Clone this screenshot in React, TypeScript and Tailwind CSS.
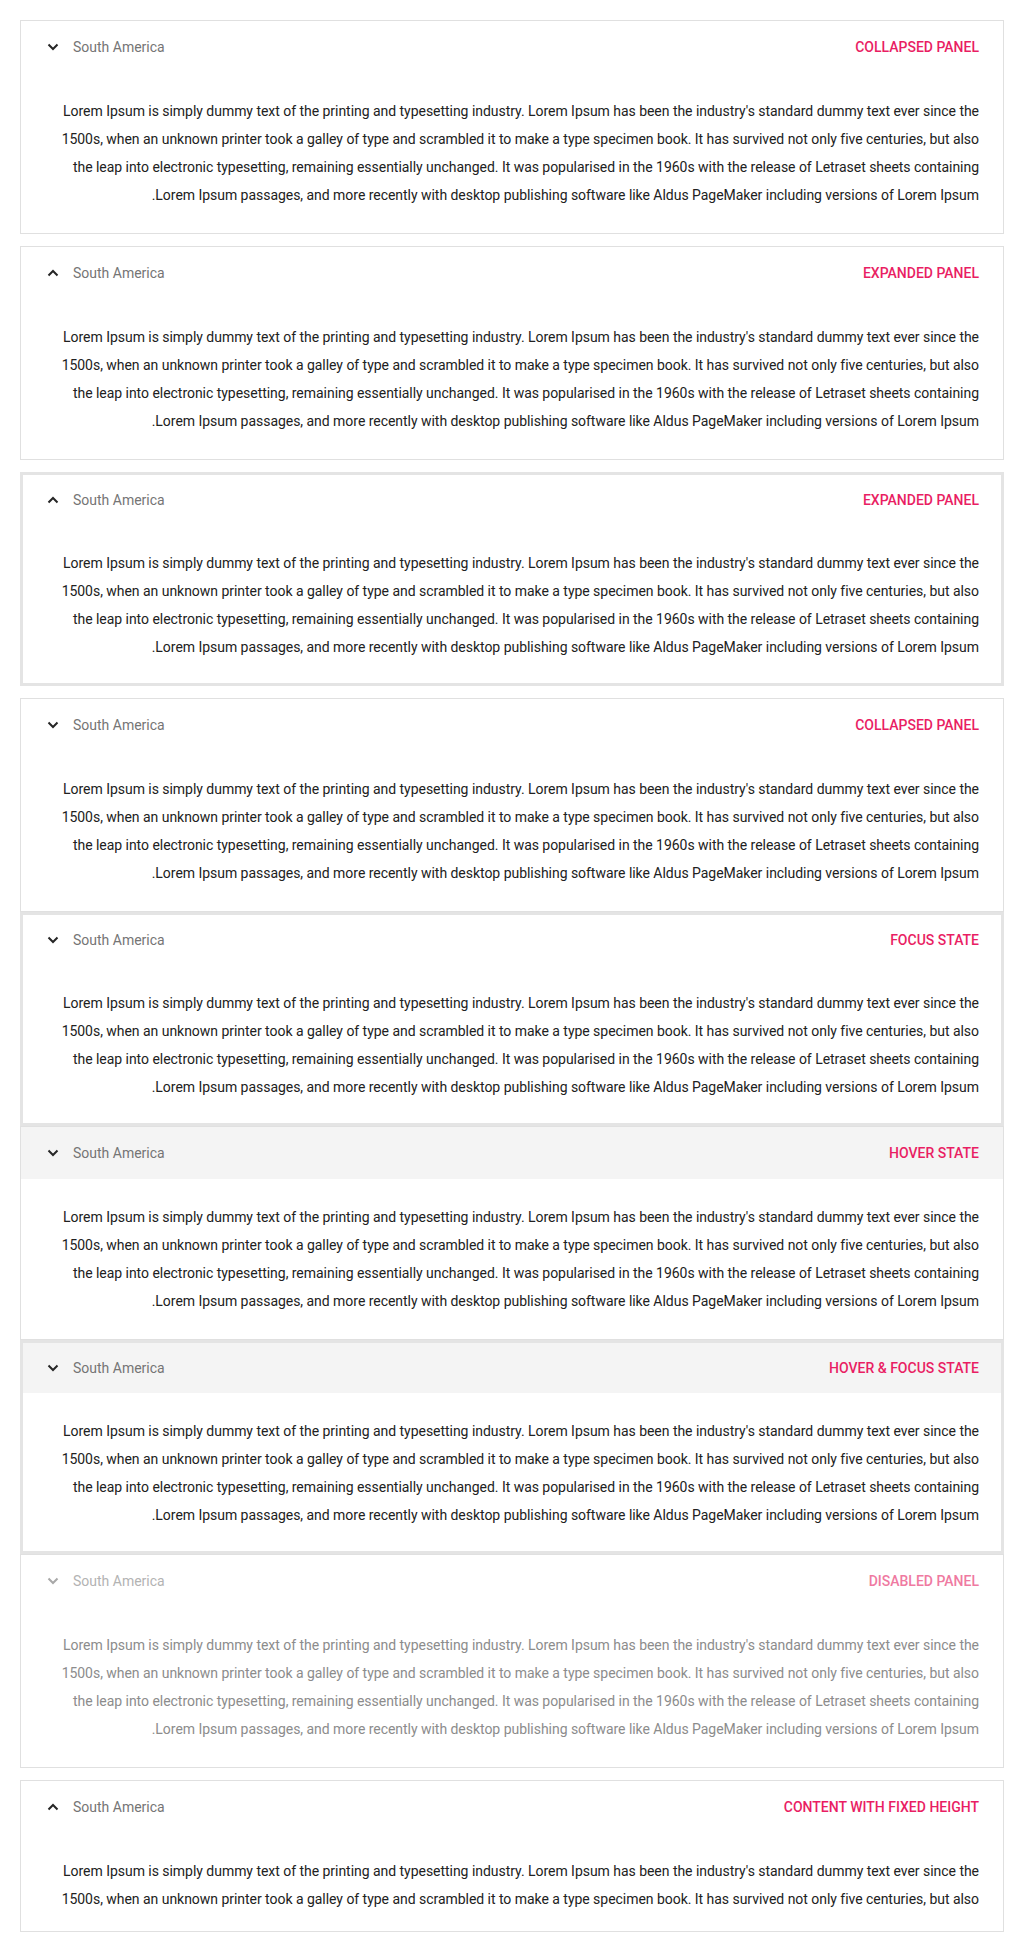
import React from "react";

const LOREM =
  "Lorem Ipsum is simply dummy text of the printing and typesetting industry. Lorem Ipsum has been the industry's standard dummy text ever since the 1500s, when an unknown printer took a galley of type and scrambled it to make a type specimen book. It has survived not only five centuries, but also the leap into electronic typesetting, remaining essentially unchanged. It was popularised in the 1960s with the release of Letraset sheets containing Lorem Ipsum passages, and more recently with desktop publishing software like Aldus PageMaker including versions of Lorem Ipsum.";

type PanelProps = {
  label: string;
  up?: boolean;
  focus?: boolean;
  hover?: boolean;
  disabled?: boolean;
  fixed?: boolean;
};

function Chevron({ up, disabled }: { up?: boolean; disabled?: boolean }) {
  return (
    <svg width="12" height="8" viewBox="0 0 12 8" className="block">
      <polyline
        points={up ? "1.5,6.5 6,2 10.5,6.5" : "1.5,1.5 6,6 10.5,1.5"}
        fill="none"
        stroke={disabled ? "#a8a8a8" : "#262626"}
        strokeWidth="2"
      />
    </svg>
  );
}

function Panel({ label, up, focus, hover, disabled, fixed }: PanelProps) {
  const border = focus ? "border-[3px] border-[#e4e4e4]" : "border border-[#e0e0e0]";
  return (
    <div className={`bg-white ${border}`}>
      <div
        className={`flex items-center justify-between ${
          focus ? "h-[50px] pl-[18px] pr-[22px]" : "h-[52px] pl-5 pr-6"
        } ${hover ? "bg-[#f4f4f4]" : ""}`}
      >
        <div className="flex items-center gap-2">
          <div className="w-6 h-6 flex items-center justify-center">
            <Chevron up={up} disabled={disabled} />
          </div>
          <span className={`text-[14px] ${disabled ? "text-[#b3b3b3]" : "text-[#757575]"}`}>
            South America
          </span>
        </div>
        <span
          className={`text-[14px] font-medium ${
            disabled ? "text-[#ef7aa1]" : "text-[#e91e63]"
          }`}
        >
          {label}
        </span>
      </div>
      <div className={`${focus ? "px-[22px] pt-6 pb-[22px]" : fixed ? "px-6 pt-6 pb-[18px]" : "px-6 py-6"}`}>
        <p
          dir="rtl"
          className={`text-[14px] leading-[28px] tracking-[-0.035px] ${
            disabled ? "text-[#8c8c8c]" : "text-[#212121]"
          } ${fixed ? "h-[56px] overflow-hidden" : ""}`}
        >
          {LOREM}
        </p>
      </div>
    </div>
  );
}

export default function App() {
  return (
    <div className="bg-white p-5 font-['Roboto',sans-serif]">
      <div className="flex flex-col gap-3">
        <Panel label="COLLAPSED PANEL" />
        <Panel label="EXPANDED PANEL" up />
        <Panel label="EXPANDED PANEL" up focus />
        <div className="flex flex-col">
          <Panel label="COLLAPSED PANEL" />
          <Panel label="FOCUS STATE" focus />
          <Panel label="HOVER STATE" hover />
          <Panel label="HOVER & FOCUS STATE" hover focus />
          <Panel label="DISABLED PANEL" disabled />
        </div>
        <Panel label="CONTENT WITH FIXED HEIGHT" up fixed />
      </div>
    </div>
  );
}
